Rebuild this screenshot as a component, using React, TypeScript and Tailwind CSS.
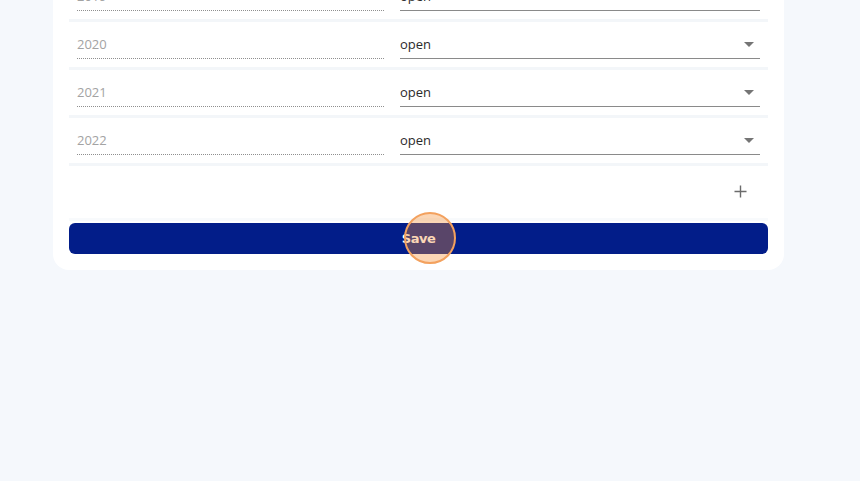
import React from "react";

const rows = ["2019", "2020", "2021", "2022"];

function Row({ year }: { year: string }) {
  return (
    <div className="h-[48px] border-b-[3px] border-[#f3f6f9] bg-white flex px-2 gap-4 box-border">
      <div className="w-[307px] h-[37px] pt-[12px] box-border border-b border-dotted border-[#8f8f8f]">
        <div className="text-[13px] leading-[20px] text-[#a3a3a3]">{year}</div>
      </div>
      <div className="flex-1 h-[37px] pt-[12px] box-border border-b border-[#8a8a8a] flex items-start justify-between">
        <div className="text-[13px] leading-[20px] text-[#2b2b2b]">open</div>
        <svg width="10" height="5" viewBox="0 0 10 5" className="mt-[8px] mr-[6px]">
          <path d="M0 0 L10 0 L5 5 Z" fill="#757575" />
        </svg>
      </div>
    </div>
  );
}

export default function App() {
  return (
    <div
      className="w-[860px] h-[481px] overflow-hidden bg-[#f5f8fc]"
      style={{ fontFamily: "'Open Sans', 'Noto Sans', sans-serif" }}
    >
      <div className="ml-[53px] w-[731px] -mt-[26px] bg-white rounded-b-[16px] px-4 pb-4">
        {rows.map((y) => (
          <Row key={y} year={y} />
        ))}
        <div className="h-[52px] flex items-center justify-end pr-[21px] border-b-[3px] border-[#f8fafc] box-content">
          <svg width="13" height="13" viewBox="0 0 13 13" className="-mt-[2px]">
            <path d="M6.5 0.5 V12.5 M0.5 6.5 H12.5" stroke="#6b6b6b" strokeWidth="1.4" />
          </svg>
        </div>
        <div className="relative mt-[2px] h-[31px] rounded-[6px] bg-[#021d89] flex items-center justify-center">
          <span
            className="text-white text-[13px] font-bold"
            style={{ fontFamily: "'DejaVu Sans', sans-serif", letterSpacing: "-0.5px" }}
          >
            Save
          </span>
          <div className="absolute left-[335px] top-[-11px] w-[52px] h-[52px] rounded-full bg-[rgba(245,140,50,0.36)] border-2 border-[#f3a15e]" />
        </div>
      </div>
    </div>
  );
}
